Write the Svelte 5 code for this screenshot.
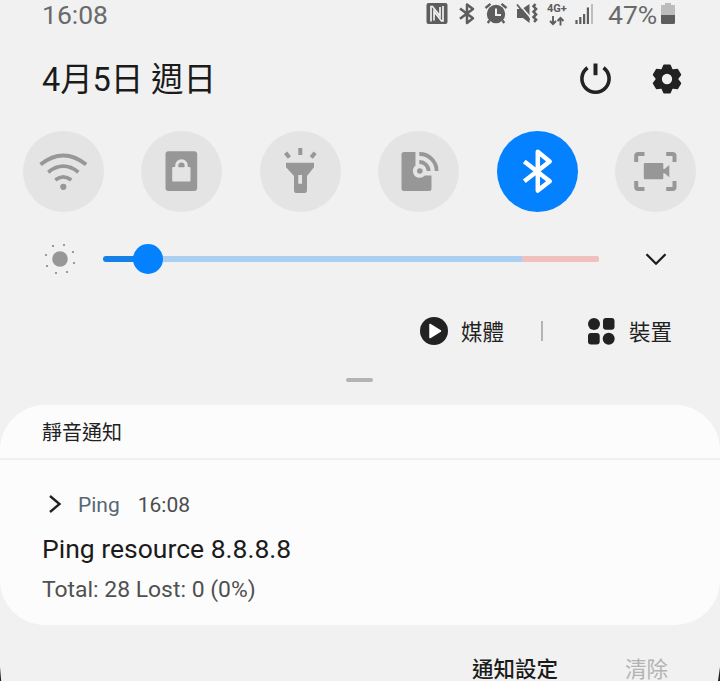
<script>
  const tiles = ['wifi', 'lock', 'torch', 'share', 'bluetooth', 'record'];
  const teeth = [0, 60, 120, 180, 240, 300];
  const rays = [[-14, -4], [-7, -13], [4, -14], [13, -7], [14, 4], [7, 13], [-4, 14], [-13, 7]];
</script>

<main class="screen">
  <div class="status">
    <span class="clock">16:08</span>
    <div class="indicators">
      <svg width="22" height="28" viewBox="0 0 22 28">
        <path fill="#5d5d5d" d="M2.500 3h17a2 2 0 0 1 2 2v17a2 2 0 0 1-2 2h-17a2 2 0 0 1-2-2V5a2 2 0 0 1 2-2z" />
        <path fill="none" stroke="#f1f1f1" stroke-width="1.700" d="M5 21.500V6.500h1.500L14 16V7M17 6v15h-1.500L8 11.500V20.500" />
      </svg>
      <svg class="bt-small" width="18" height="28" viewBox="0 0 18 28">
        <path fill="none" stroke="#5d5d5d" stroke-width="2.500" stroke-linejoin="round" d="M2 8.400L15 18.300L9 23V4.500L15 9L2 18.800" />
      </svg>
      <svg class="alarm" width="24" height="28" viewBox="0 0 24 28">
        <circle cx="12" cy="14" r="9.200" fill="#5d5d5d" />
        <path d="M1.500 8L6.500 3.800M22.500 8L17.500 3.800M5.500 20.500L3.700 23M18.500 20.500L20.300 23" fill="none" stroke="#5d5d5d" stroke-width="2.300" />
        <path d="M12 8.500V15h5" fill="none" stroke="#f1f1f1" stroke-width="2" />
      </svg>
      <svg class="mute" width="23" height="28" viewBox="0 0 23 28">
        <path fill="#5d5d5d" d="M1 9h5L13.500 4v19L7 18H1z" />
        <path d="M2.500 3.500L14.500 17.500" stroke="#f1f1f1" stroke-width="1.600" />
        <path d="M1 4.500L13.500 20" stroke="#5d5d5d" stroke-width="1.800" />
        <path d="M19.500 4l-2 2.300 2.600 2.700-2.600 2.700 2.600 2.700-2.600 2.700 2.600 2.700-2 2.200" fill="none" stroke="#5d5d5d" stroke-width="2.500" />
      </svg>
      <div class="net">
        <span>4G+</span>
        <svg width="17" height="10" viewBox="0 0 17 10">
          <path d="M4 0v8M1 5l3 3.200L7 5M11.500 9.500V2M8.500 5l3-3.200L14.500 5" fill="none" stroke="#5d5d5d" stroke-width="1.900" />
        </svg>
      </div>
      <svg class="signal" width="19" height="28" viewBox="0 0 19 28">
        <path d="M1.500 24v-4M5.300 24v-7M9.100 24v-10M12.900 24V7.500" stroke="#5d5d5d" stroke-width="2.200" />
        <path d="M17 24V4" stroke="#bdbdbd" stroke-width="2" />
      </svg>
      <span class="percent">47%</span>
      <svg class="battery" width="14" height="28" viewBox="0 0 14 28">
        <path fill="#bcbcbc" d="M4 3h6v2h4v10H0V5h4z" />
        <path fill="#5d5d5d" d="M0 15h14v7.500q0 1.500-1.500 1.500h-11Q0 24 0 22.500z" />
      </svg>
    </div>
  </div>

  <header>
    <h1>4月5日 週日</h1>
    <div class="actions">
      <svg width="34" height="34" viewBox="-17 -17 34 34">
        <path d="M-7.500-11.300A13.600 13.600 0 1 0 8.500-11.300" fill="none" stroke="#222" stroke-width="3.600" />
        <path d="M.5-15.500v11.700" stroke="#222" stroke-width="4" />
      </svg>
      <svg width="34" height="34" viewBox="-17 -17 34 34">
        <g fill="#222" stroke="#222" stroke-width="1.500" stroke-linejoin="round">
          {#each teeth as a}
            <path transform="rotate({a})" d="M-5.500-8L-3-13.800h6L5.500-8z" />
          {/each}
        </g>
        <circle r="7.900" fill="none" stroke="#222" stroke-width="5.500" />
      </svg>
    </div>
  </header>

  <nav class="tiles">
    {#each tiles as t}
      <button class="tile" class:on={t === 'bluetooth'} aria-label={t}>
        <svg width="81" height="81" viewBox="0 0 81 81">
          {#if t === 'wifi'}
            <g fill="none" stroke="currentColor" stroke-width="3.700">
              <path d="M17.500 33.500Q40.300 15.500 63.100 33.500M25.200 41.200Q40.300 29.200 55.400 41.200M32.300 49Q40.300 42.800 48.300 49" />
            </g>
            <circle cx="40.300" cy="55.800" r="3.100" fill="currentColor" />
          {:else if t === 'lock'}
            <rect x="24.500" y="20.300" width="31.700" height="39.700" rx="3" fill="currentColor" />
            <rect x="31.200" y="36" width="18.300" height="14.500" rx="1" fill="#e4e4e4" />
            <path d="M35.800 37V34.500a4.700 4.700 0 0 1 9.400 0V37" fill="none" stroke="#e4e4e4" stroke-width="3.200" />
            <path d="M37.600 36.300v-.3a2.700 2.500 0 0 1 5.400 0v.3z" fill="currentColor" />
          {:else if t === 'torch'}
            <path fill="currentColor" fill-rule="evenodd" d="M26 31.700h28v4.500L47 45v14.200q0 2.800-2.800 2.800h-7.400Q34 62 34 59.200V45l-8-8.800zM38.300 44v8.700H42V44z" />
            <path d="M40.300 17v7M25.600 21.700l3.800 4.800M55.100 21.700l-3.800 4.800" stroke="currentColor" stroke-width="4" />
          {:else if t === 'share'}
            <path fill="currentColor" d="M26 21h11.500v13.600a6.900 6.900 0 0 0 3.300 12.200 6.900 6.900 0 0 0 6-2.200h6.700V57.500q0 2.500-2.500 2.500H26q-2.500 0-2.500-2.500v-34Q23.500 21 26 21z" />
            <circle cx="41.800" cy="40" r="2.800" fill="currentColor" />
            <path d="M41.300 31a9 9 0 0 1 9.300 9M41.300 23a17 17 0 0 1 17.300 17" fill="none" stroke="currentColor" stroke-width="3.800" />
          {:else if t === 'bluetooth'}
            <path d="M27.300 30.500L52.700 50.300L40.800 59.500V20.800L52.700 30.400L27.300 50.200" fill="none" stroke="#fff" stroke-width="4.500" stroke-linejoin="round" />
          {:else}
            <path d="M21.200 31v-6q0-2 2-2h6.300M51.200 23h6.300q2 0 2 2v6M59.500 50v6q0 2-2 2h-6.300M29.500 58h-6.300q-2 0-2-2v-6" fill="none" stroke="currentColor" stroke-width="4" />
            <rect x="28.800" y="32" width="19.500" height="16.200" rx="1" fill="currentColor" />
            <path d="M48 38h1.500l4.800-4v12.200l-4.800-4H48z" fill="currentColor" />
          {/if}
        </svg>
      </button>
    {/each}
  </nav>

  <div class="brightness">
    <svg width="36" height="36" viewBox="-18 -18 36 36">
      <circle r="7.800" fill="#979797" />
      {#each rays as [x, y]}
        <circle cx={x} cy={y} r="1.100" fill="#858585" />
      {/each}
    </svg>
    <div class="track">
      <i class="fill"></i><i class="knob"></i><i class="rest"></i><i class="warn"></i>
    </div>
    <svg class="chevron" width="24" height="16" viewBox="0 0 24 16">
      <path d="M2.500 3.300L12 12.700L21.500 3.300" fill="none" stroke="#1c1c1c" stroke-width="2.300" />
    </svg>
  </div>

  <div class="outputs">
    <svg width="28" height="28" viewBox="-14 -14 28 28">
      <circle r="14" fill="#222" />
      <path d="M-4-6.500v13L6.500 0z" fill="#fff" stroke="#fff" stroke-width="1.500" stroke-linejoin="round" />
    </svg>
    <span class="media">媒體</span>
    <i class="bar"></i>
    <svg width="27" height="27" viewBox="0 0 27 27" fill="#222">
      <circle cx="6" cy="6" r="6" /><circle cx="20.700" cy="20.700" r="6" />
      <rect x="15" y="0" width="11.500" height="11.700" rx="3" /><rect x="0" y="15" width="11.700" height="11.500" rx="3" />
    </svg>
    <span class="device">裝置</span>
  </div>

  <div class="handle"></div>

  <section class="card">
    <h2>靜音通知</h2>
    <article>
      <div class="source">
        <svg width="14" height="20" viewBox="0 0 14 20">
          <path d="M2 2l9.500 8L2 18" fill="none" stroke="#222" stroke-width="2.400" />
        </svg>
        <span class="app">Ping</span>
        <span class="when">16:08</span>
      </div>
      <h3>Ping resource 8.8.8.8</h3>
      <p>Total: 28 Lost: 0 (0%)</p>
    </article>
  </section>

  <footer>
    <span class="settings">通知設定</span>
    <span class="clear">清除</span>
  </footer>
  <i class="edge left"></i>
  <i class="edge right"></i>
</main>

<style>
  :global(body) { margin: 0; background: #f1f1f1; overflow: hidden; }
  .screen {
    position: relative; width: 720px; height: 681px; overflow: hidden;
    display: flex; flex-direction: column; background: #f1f1f1; color: #1b1b1b;
    font-family: Roboto, "Noto Sans CJK TC", sans-serif;
  }
  svg { display: block; flex: none; }
  i { display: block; flex: none; }
  h1, h2, h3, p { margin: 0; font-weight: 400; white-space: nowrap; }
  .status {
    height: 28px; flex: none; display: flex; justify-content: space-between;
    padding: 0 45px 0 42px; color: #6a6a6a; font-size: 26.500px; line-height: 29px;
  }
  .indicators { display: flex; }
  .bt-small { margin-left: 10px; }
  .alarm { margin-left: 8px; }
  .mute { margin-left: 8px; }
  .net {
    width: 22px; margin-left: 8px; padding-top: 3px; display: flex; flex-direction: column;
    font-size: 11px; line-height: 11px; font-weight: 700; color: #5d5d5d;
  }
  .net svg { margin: 2px 0 0 2px; }
  .signal { margin-left: 6px; }
  .percent { width: 49px; margin: 0 4px 0 14px; }
  header {
    height: 103px; flex: none; display: flex; justify-content: space-between; align-items: center;
    padding: 0 36px 2px 42px; box-sizing: border-box;
  }
  h1 { font-size: 32.500px; line-height: 48px; letter-spacing: -0.100px; padding-top: 2px; }
  .actions { display: flex; gap: 38px; }
  .tiles { display: flex; justify-content: space-between; padding: 0 24px 0 23px; flex: none; }
  .tile {
    width: 81px; height: 81px; border: 0; padding: 0; border-radius: 50%;
    background: #e4e4e4; color: #979797;
  }
  .on { background: #0381fe; }
  .brightness { height: 94px; flex: none; display: flex; align-items: center; padding-left: 42px; }
  .track { width: 496px; margin-left: 25px; display: flex; align-items: center; }
  .fill { width: 31px; height: 6px; background: #1580e8; border-radius: 3px 0 0 3px; }
  .knob { position: relative; width: 30px; height: 30px; border-radius: 50%; background: #0381fe; margin: 0 -1px; }
  .rest { flex: 1; height: 6px; background: #abcff0; }
  .warn { width: 77px; height: 6px; background: #f2bfbf; border-radius: 0 2px 2px 0; }
  .chevron { margin-left: 45px; }
  .outputs {
    height: 50px; flex: none; display: flex; align-items: center; padding-left: 420px;
    font-size: 21.500px; line-height: 32px; color: #222;
  }
  .outputs span { padding-top: 3px; }
  .media { margin-left: 13px; }
  .bar { width: 2px; height: 20px; background: #b4b4b4; margin: 0 45px 0 37px; }
  .device { margin-left: 14px; }
  .handle { width: 27px; height: 4px; flex: none; border-radius: 2px; background: #b3b3b3; margin: 22px 0 23px 346px; }
  .card { height: 220px; flex: none; border-radius: 45px; background: #fcfcfc; overflow: hidden; }
  h2 {
    height: 53px; padding-left: 42px; border-bottom: 2px solid #f0f0f0;
    font-size: 20px; line-height: 57px; color: #222;
  }
  article { padding: 29px 0 0 42px; }
  .source { display: flex; align-items: center; height: 30px; padding-left: 6px; font-size: 21px; }
  .source span { padding-top: 2px; }
  .app { color: #596673; margin-left: 16px; }
  .when { color: #4c4c4c; margin-left: 18px; }
  h3 { font-size: 26.500px; line-height: 34px; margin-top: 13px; }
  p { font-size: 22.900px; line-height: 30px; margin-top: 9px; color: #505050; }
  footer { height: 56px; flex: none; display: flex; padding: 29px 0 0 472px; box-sizing: border-box; font-size: 21.500px; line-height: 32px; }
  .settings { font-weight: 500; }
  .clear { margin-left: 67px; color: #b3b3b3; }
  .edge { position: absolute; bottom: 0; width: 2px; height: 14px; background: #222; }
  .left { left: 0; clip-path: polygon(0 0, 60% 100%, 0 100%); }
  .right { right: 0; clip-path: polygon(100% 0, 100% 100%, 0 100%); }
</style>
